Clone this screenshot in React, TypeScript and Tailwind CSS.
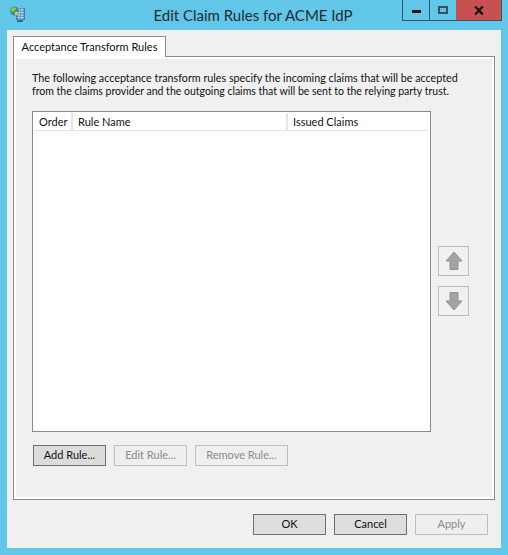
const font = "font-['Lato','Noto_Sans',sans-serif]";

function AppIcon() {
  return (
    <svg width="18" height="18" viewBox="0 0 18 18" className="block">
      <rect x="7" y="3" width="9" height="12" fill="#3f7fc0" />
      <path d="M8 5h7M8 7.500h7M8 10h7M8 12.500h7M10 3v12M13 3v12" stroke="#cfe6f5" strokeWidth="0.8" />
      <rect x="8" y="15" width="6" height="2" fill="#2d6aa5" />
      <circle cx="5.500" cy="6" r="4.500" fill="#3b8f8a" />
      <path d="M2 4c2-2 4-2 5-1s-1 2-2 3-2 1-3 0z" fill="#8cc63f" />
      <path d="M6 7c1.500-.5 3 0 3.500 1-.5 1.500-2 2.500-3.500 2z" fill="#e8c04a" />
    </svg>
  );
}

function ArrowButton({ down }: { down?: boolean }) {
  return (
    <div className="w-[31px] h-[30px] border border-[#bcbcbc] flex items-center justify-center">
      <svg width="18" height="20" viewBox="0 0 18 20" className={down ? "rotate-180" : ""}>
        <path d="M9 1 L17 10 L13 10 L13 18.500 L5 18.500 L5 10 L1 10 Z" fill="#a3a3a3" stroke="#939393" strokeWidth="1" />
      </svg>
    </div>
  );
}

function DlgButton({ label, width, disabled, strong }: { label: string; width: string; disabled?: boolean; strong?: boolean }) {
  const look = disabled
    ? "border-[#bfbfbf] bg-[#efefef] text-[#8a8a8a]"
    : strong
      ? "border-[#6f6f6f] bg-[#dcdcdc] text-[#111]"
      : "border-[#707070] bg-[#dddddd] text-[#111]";
  return (
    <div className={`${width} h-[21px] border flex items-center justify-center text-[11px] ${look}`}>
      {label}
    </div>
  );
}

export default function App() {
  return (
    <div className={`w-[508px] h-[555px] bg-[#62c6e8] flex flex-col pl-[7px] pr-[7px] pb-[7px] overflow-hidden text-[#111] ${font}`}>
      {/* title bar */}
      <div className="relative h-[30px] shrink-0 flex items-center justify-center">
        <div className="absolute left-[2px] top-[5px]">
          <AppIcon />
        </div>
        <span className="text-[15px] text-[#1f2c33] -ml-[2px]">Edit Claim Rules for ACME IdP</span>
        <div className="absolute right-[-1px] top-0 h-[21px] flex border-b border-x border-[#2c5a70]">
          <div className="w-[27px] flex items-center justify-center border-r border-[#2c5a70]">
            <div className="w-[9px] h-[3px] bg-[#111] mt-[2px]" />
          </div>
          <div className="w-[26px] flex items-center justify-center">
            <div className="w-[10px] h-[8px] border-2 border-[#26556d] bg-[#7fb6cf]" />
          </div>
          <div className="w-[45px] bg-[#c75050] flex items-center justify-center">
            <svg width="10" height="9" viewBox="0 0 10 9">
              <path d="M1.200 0.500 L8.800 8.500 M8.800 0.500 L1.200 8.500" stroke="#111" strokeWidth="2.200" />
            </svg>
          </div>
        </div>
      </div>

      {/* client area */}
      <div className="flex-1 min-h-0 bg-[#f0f0f0] flex flex-col px-[6px] pt-[6px]">
        <div className="relative z-10 -mb-px w-[153px] h-[21px] border border-b-0 border-[#8c8c8c] bg-white flex items-center justify-center text-[11px] whitespace-nowrap">
          Acceptance Transform Rules
        </div>

        <div className="h-[444px] w-[482px] border border-[#8c8c8c] bg-[#f0f0f0] flex flex-col shadow-[inset_0_0_0_2px_#ffffff] px-[18px] pt-[14px]">
          <p className="text-[10.75px] leading-[13px] whitespace-nowrap">
            The following acceptance transform rules specify the incoming claims that will be accepted
            <br />
            <span className="text-[10.5px]">from the claims provider and the outgoing claims that will be sent to the relying party trust.</span>
          </p>

          <div className="mt-[13px] flex">
            <div className="w-[399px] h-[321px] border border-[#8a8a8a] bg-white flex flex-col">
              <div className="h-[18px] flex items-stretch border-b border-[#e2e2e2] text-[11px] mx-px mt-px">
                <div className="w-[39px] pl-[5px] pt-px border-r-2 border-[#e6e6e6] flex items-center">Order</div>
                <div className="w-[215px] pl-[5px] pt-px border-r-2 border-[#e6e6e6] flex items-center">Rule Name</div>
                <div className="flex-1 pl-[5px] pt-px flex items-center">Issued Claims</div>
              </div>
            </div>
            <div className="ml-[7px] pt-[135px] flex flex-col gap-[10px]">
              <ArrowButton />
              <ArrowButton down />
            </div>
          </div>

          <div className="mt-[13px] ml-px flex gap-[8px]">
            <DlgButton label="Add Rule..." width="w-[73px]" strong />
            <DlgButton label="Edit Rule..." width="w-[73px]" disabled />
            <DlgButton label="Remove Rule..." width="w-[93px]" disabled />
          </div>
        </div>

        <div className="mt-[14px] flex justify-end gap-[8px] pr-[7px]">
          <DlgButton label="OK" width="w-[73px]" />
          <DlgButton label="Cancel" width="w-[73px]" />
          <DlgButton label="Apply" width="w-[73px]" disabled />
        </div>
      </div>
    </div>
  );
}
